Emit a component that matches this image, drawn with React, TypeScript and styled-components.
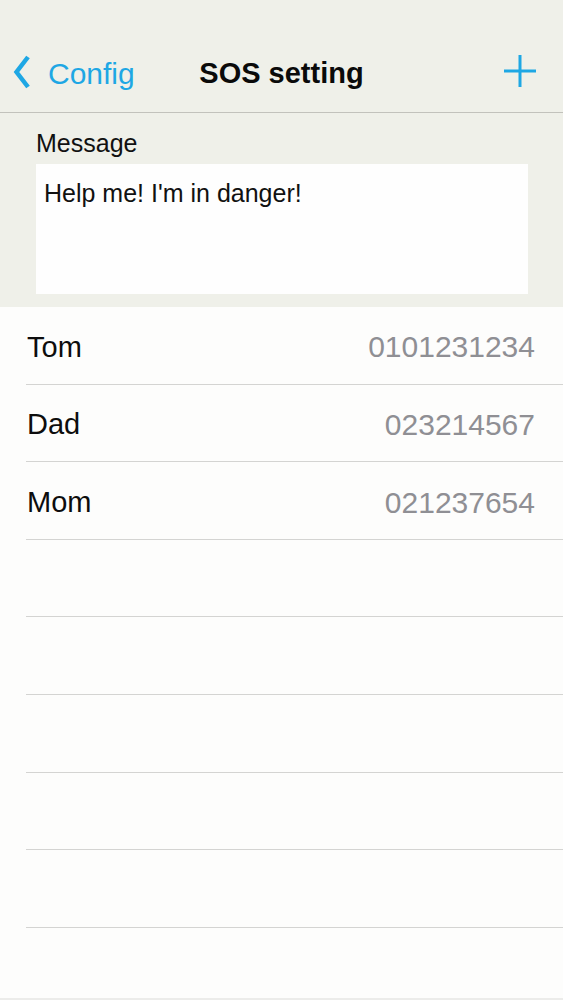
import styled, { createGlobalStyle } from 'styled-components'

const GlobalStyle = createGlobalStyle`
  html, body {
    margin: 0;
    padding: 0;
    background: #fdfdfc;
  }
  body {
    font-family: "Liberation Sans", Arial, sans-serif;
    -webkit-font-smoothing: antialiased;
  }
`

const Screen = styled.div`
  width: 563px;
  height: 1000px;
  display: flex;
  flex-direction: column;
  overflow: hidden;
  background: #fdfdfc;
`

const Header = styled.header`
  background-color: #eff0e9;
  padding-top: 35px;
  border-bottom: 1.5px solid #c2c2bc;
`

const NavBar = styled.div`
  height: 77px;
  display: grid;
  grid-template-columns: 1fr auto 1fr;
  align-items: center;
`

const BackButton = styled.div`
  display: flex;
  align-items: center;
  padding-left: 13px;
  color: #1ea7e4;
  font-size: 30px;
  cursor: pointer;
  svg {
    margin-right: 18px;
    margin-top: -3px;
  }
`

const Title = styled.h1`
  margin: 0;
  font-size: 29px;
  font-weight: 700;
  color: #0a0a0a;
`

const AddButton = styled.div`
  display: flex;
  justify-content: flex-end;
  padding-right: 27px;
  margin-top: -6px;
  cursor: pointer;
`

const MessageSection = styled.section`
  background-color: #eff0e9;
  padding: 15px 35px 13.4px 36px;
`

const Label = styled.div`
  font-size: 25px;
  line-height: 30px;
  color: #111;
  margin-bottom: 5.7px;
`

const MessageBox = styled.div`
  background: #fefefe;
  height: 130px;
  box-sizing: border-box;
  padding: 14px 8px;
  font-size: 25px;
  line-height: 30px;
  color: #111;
`

const List = styled.ul`
  flex: 1;
  margin: 0;
  padding: 0;
  list-style: none;
  overflow: hidden;
`

const Row = styled.li`
  height: 77.6px;
  box-sizing: border-box;
  margin-left: 26px;
  padding: 4px 28px 0 1px;
  display: flex;
  align-items: center;
  justify-content: space-between;
  border-bottom: 1px solid #d4d4d2;
`

const Name = styled.span`
  font-size: 29px;
  color: #0d0d0d;
`

const Phone = styled.span`
  font-size: 30px;
  color: #8f8f94;
`

const Footer = styled.div`
  height: 2px;
  background: #ececea;
`

interface Contact {
  name: string
  phone: string
}

const contacts: Contact[] = [
  { name: 'Tom', phone: '0101231234' },
  { name: 'Dad', phone: '023214567' },
  { name: 'Mom', phone: '021237654' },
]

const EMPTY_ROWS = 6

const App = () => {
  return (
    <>
      <GlobalStyle />
      <Screen>
        <Header>
          <NavBar>
            <BackButton>
              <svg width="17" height="34" viewBox="0 0 17 34">
                <path
                  d="M15 2 L3.5 17 L15 32"
                  fill="none"
                  stroke="#1ea7e4"
                  strokeWidth="4.5"
                  strokeLinecap="butt"
                  strokeLinejoin="miter"
                />
              </svg>
              Config
            </BackButton>
            <Title>SOS setting</Title>
            <AddButton>
              <svg width="32" height="32" viewBox="0 0 32 32">
                <path d="M16 0 V32 M0 16 H32" stroke="#1ea7e4" strokeWidth="3" />
              </svg>
            </AddButton>
          </NavBar>
        </Header>
        <MessageSection>
          <Label>Message</Label>
          <MessageBox>Help me! I'm in danger!</MessageBox>
        </MessageSection>
        <List>
          {contacts.map((c) => (
            <Row key={c.name}>
              <Name>{c.name}</Name>
              <Phone>{c.phone}</Phone>
            </Row>
          ))}
          {Array.from({ length: EMPTY_ROWS }).map((_, i) => (
            <Row key={`empty-${i}`} />
          ))}
        </List>
        <Footer />
      </Screen>
    </>
  )
}

export default App
